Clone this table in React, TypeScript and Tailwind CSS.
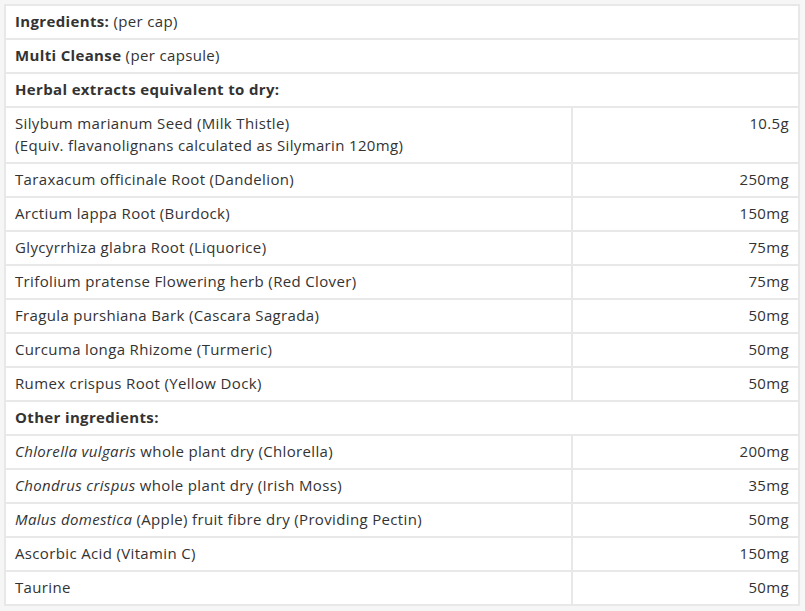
type Row = { name: React.ReactNode; amount: string };

const herbal: Row[] = [
  {
    name: (
      <>
        Silybum marianum Seed (Milk Thistle)
        <br />
        (Equiv. flavanolignans calculated as Silymarin 120mg)
      </>
    ),
    amount: '10.5g',
  },
  { name: 'Taraxacum officinale Root (Dandelion)', amount: '250mg' },
  { name: 'Arctium lappa Root (Burdock)', amount: '150mg' },
  { name: 'Glycyrrhiza glabra Root (Liquorice)', amount: '75mg' },
  { name: 'Trifolium pratense Flowering herb (Red Clover)', amount: '75mg' },
  { name: 'Fragula purshiana Bark (Cascara Sagrada)', amount: '50mg' },
  { name: 'Curcuma longa Rhizome (Turmeric)', amount: '50mg' },
  { name: 'Rumex crispus Root (Yellow Dock)', amount: '50mg' },
];

const other: Row[] = [
  { name: <><em>Chlorella vulgaris</em> whole plant dry (Chlorella)</>, amount: '200mg' },
  { name: <><em>Chondrus crispus</em> whole plant dry (Irish Moss)</>, amount: '35mg' },
  { name: <><em>Malus domestica</em> (Apple) fruit fibre dry (Providing Pectin)</>, amount: '50mg' },
  { name: 'Ascorbic Acid (Vitamin C)', amount: '150mg' },
  { name: 'Taurine', amount: '50mg' },
];

const cell = 'border-2 border-[#e8e8e8] px-[9px] pt-[4px] pb-[6px] align-top';

function Heading({ children }: { children: React.ReactNode }) {
  return (
    <tr>
      <td colSpan={2} className={cell}>
        {children}
      </td>
    </tr>
  );
}

function ItemRow({ row }: { row: Row }) {
  return (
    <tr>
      <td className={`${cell} w-[567px]`}>{row.name}</td>
      <td className={`${cell} text-right`}>{row.amount}</td>
    </tr>
  );
}

export default function App() {
  return (
    <div className="min-h-[611px] bg-[#f6f6f6] p-[4px] font-['Open_Sans',sans-serif] text-[15px] leading-[22px] tracking-[0.35px] text-[#333333]">
      <table className="w-[796px] border-collapse bg-white">
        <tbody>
          <Heading>
            <strong>Ingredients:</strong> (per cap)
          </Heading>
          <Heading>
            <strong>Multi Cleanse</strong> (per capsule)
          </Heading>
          <Heading>
            <strong>Herbal extracts equivalent to dry:</strong>
          </Heading>
          {herbal.map((row, i) => (
            <ItemRow key={i} row={row} />
          ))}
          <Heading>
            <strong>Other ingredients:</strong>
          </Heading>
          {other.map((row, i) => (
            <ItemRow key={i} row={row} />
          ))}
        </tbody>
      </table>
    </div>
  );
}
